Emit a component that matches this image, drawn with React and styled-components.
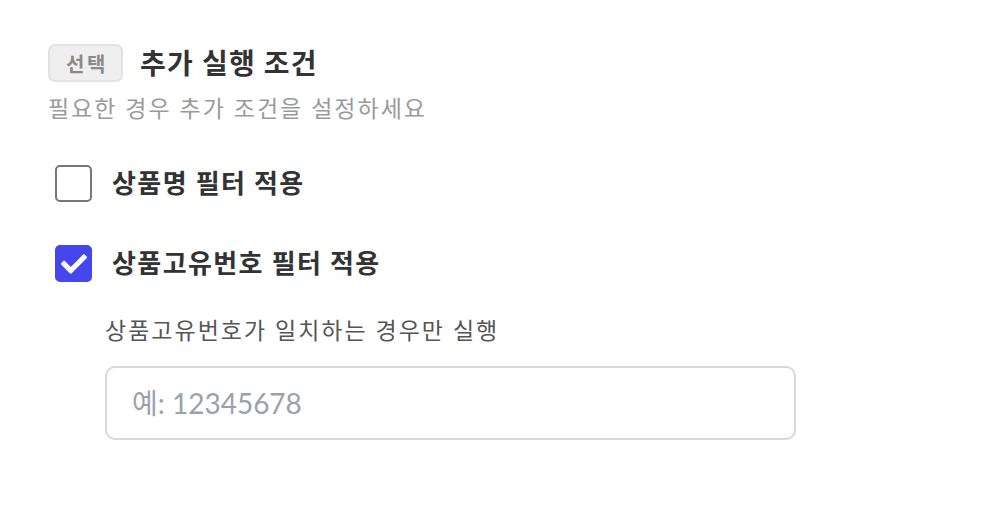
import React, { useState } from "react";
import styled, { createGlobalStyle } from "styled-components";
import { FaCheck } from "react-icons/fa";

const GlobalStyle = createGlobalStyle`
  body {
    margin: 0;
    background: #fff;
    font-family: Lato, "Noto Sans CJK KR", sans-serif;
  }
`;

export default function App() {
  const [fields, setFields] = useState({ name: false, code: true, value: "" });

  const toggle = (key) => setFields((f) => ({ ...f, [key]: !f[key] }));

  return (
    <>
      <GlobalStyle />
      <Section>
        <Header>
          <Badge>선택</Badge>
          <Title>추가 실행 조건</Title>
        </Header>
        <Desc>필요한 경우 추가 조건을 설정하세요</Desc>

        <Options>
          <Option>
            <HiddenInput type="checkbox" checked={fields.name} onChange={() => toggle("name")} />
            <Box checked={fields.name}>{fields.name && <FaCheck size={26} color="#fff" />}</Box>
            <OptionLabel>상품명 필터 적용</OptionLabel>
          </Option>
          <Option>
            <HiddenInput type="checkbox" checked={fields.code} onChange={() => toggle("code")} />
            <Box checked={fields.code}>{fields.code && <FaCheck size={26} color="#fff" />}</Box>
            <OptionLabel>상품고유번호 필터 적용</OptionLabel>
          </Option>
        </Options>

        {fields.code && (
          <SubField>
            <SubLabel>상품고유번호가 일치하는 경우만 실행</SubLabel>
            <Input
              type="text"
              placeholder="예: 12345678"
              value={fields.value}
              onChange={(e) => setFields((f) => ({ ...f, value: e.target.value }))}
            />
          </SubField>
        )}
      </Section>
    </>
  );
}

const Section = styled.div`
  padding: 44px 48px 0;
`;

const Header = styled.div`
  display: flex;
  align-items: center;
  gap: 17px;
`;

const Badge = styled.span`
  display: inline-flex;
  align-items: center;
  justify-content: center;
  width: 75px;
  height: 38px;
  box-sizing: border-box;
  background: #efefef;
  border: 2px solid #e2e2e2;
  border-radius: 7px;
  color: #8a8a8a;
  font-size: 20px;
  font-weight: 700;
  letter-spacing: 2.5px;
  padding-left: 3px;
`;

const Title = styled.h2`
  margin: 0;
  font-size: 28px;
  line-height: 38px;
  font-weight: 700;
  letter-spacing: 1.2px;
  color: #333;
`;

const Desc = styled.p`
  margin: 11px 0 0;
  font-size: 23px;
  line-height: 30px;
  letter-spacing: 2px;
  color: #9a9a9a;
`;

const Options = styled.div`
  display: flex;
  flex-direction: column;
  gap: 43px;
  margin-top: 42px;
  padding-left: 7px;
`;

const Option = styled.label`
  display: flex;
  align-items: center;
  gap: 20px;
  height: 37px;
  cursor: pointer;
`;

const HiddenInput = styled.input`
  display: none;
`;

const Box = styled.span`
  width: 37px;
  height: 37px;
  box-sizing: border-box;
  border-radius: 5px;
  border: 2px solid ${(p) => (p.checked ? "#4646ee" : "#777")};
  background: ${(p) => (p.checked ? "#4646ee" : "#fff")};
  display: flex;
  align-items: center;
  justify-content: center;
`;

const OptionLabel = styled.span`
  font-size: 26px;
  line-height: 37px;
  font-weight: 700;
  letter-spacing: 1.4px;
  color: #333;
`;

const SubField = styled.div`
  margin-top: 33px;
  padding-left: 57px;
  display: flex;
  flex-direction: column;
  gap: 21px;
`;

const SubLabel = styled.span`
  font-size: 23px;
  line-height: 30px;
  letter-spacing: 2px;
  color: #555;
`;

const Input = styled.input`
  width: 691px;
  height: 74px;
  box-sizing: border-box;
  border: 2px solid #d6d8dc;
  border-radius: 10px;
  padding: 0 25px;
  font-family: Lato, "Noto Sans CJK KR", sans-serif;
  font-size: 28px;
  color: #333;
  outline: none;
  &::placeholder {
    color: #9ba1ab;
  }
`;
